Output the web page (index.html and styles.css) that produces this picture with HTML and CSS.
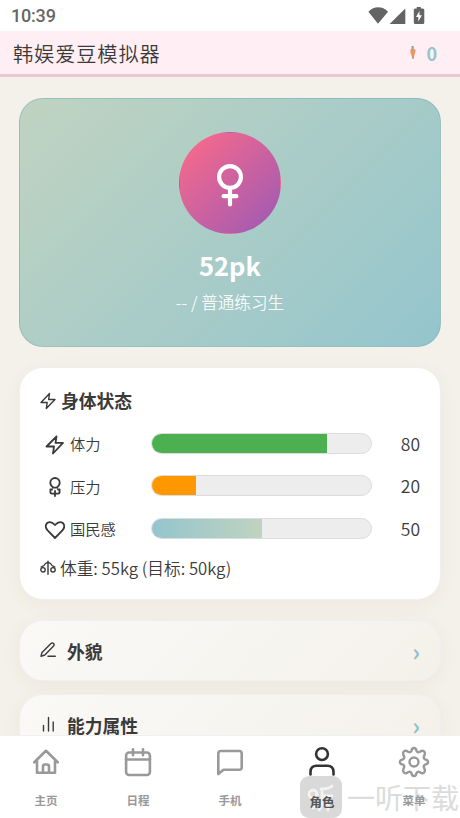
FILE: index.html
```html
<!DOCTYPE html>
<html lang="zh-CN">
<head>
<meta charset="utf-8">
<meta name="viewport" content="width=device-width, initial-scale=1">
<title>韩娱爱豆模拟器</title>
<link rel="stylesheet" href="styles.css">
</head>
<body>
<div class="status-bar">
  <span class="clock">10:39</span>
  <svg class="signals" width="60" height="20" viewBox="0 0 60 20" fill="#646464">
    <path d="M.4 5.700C6-.1 14.400-.1 20 5.700L10 17.800z"/>
    <path d="M37.300 2.500V18H21.600z"/>
    <path fill-rule="evenodd" d="M48.800 1h4v1.500h2q1.500 0 1.500 1.500v12.500q0 1.500-1.500 1.500h-7.500q-1.500 0-1.500-1.500V4q0-1.500 1.500-1.500h1.500zM51.500 5l-3.500 6h2.300v4.500l3.600-6.200h-2.400z"/>
  </svg>
</div>
<header class="app-header">
  <h1>韩娱爱豆模拟器</h1>
  <div class="currency">
    <svg width="6" height="14" viewBox="0 0 6 14"><path d="M1.400 0h2.400v4H1.400z" fill="#86b894"/><path d="M.3 3.500q2.700-1 5.200 0 .2 3-1 5L3.600 13H2.300L1.400 9Q.2 7 .3 3.500z" fill="#ea9464"/></svg>
    <span>0</span>
  </div>
</header>
<main class="content">
  <section class="profile">
    <div class="avatar">
      <svg width="30" height="48" viewBox="0 0 30 48" fill="none" stroke="#fff" stroke-width="4.200" stroke-linecap="round"><circle cx="15" cy="16" r="10.900"/><path d="M15 27v16.400M8.600 35.200h12.800"/></svg>
    </div>
    <div class="name">52pk</div>
    <div class="role">-- / 普通练习生</div>
  </section>
  <section class="card">
    <h2><svg width="16" height="18" viewBox="0 0 16 18" class="line"><path d="M9.500 1.500 1 10.500h6.200L6.300 16.500 15 7.500H8.700z"/></svg>身体状态</h2>
    <div class="stat">
      <span class="icon"><svg width="20" height="20" viewBox="0 0 20 20" class="line bold"><path d="M11.500 1.500 1.500 11.500H9L8 18.500l10-10.600h-7.500z"/></svg></span>
      <span class="label">体力</span>
      <div class="track"><div class="fill energy" style="width:80%"></div></div>
      <span class="value">80</span>
    </div>
    <div class="stat">
      <span class="icon"><svg width="20" height="20" viewBox="0 0 20 20" class="line bold"><path d="M8.300 10.500C6 9 5.300 7.500 5.300 5.700a4.700 4.700 0 0 1 9.400 0c0 1.800-.7 3.300-3 4.800M7.800 10.700h4.400M5.400 12.500v2.500q0 1.600 1.600 1.600h6q1.600 0 1.600-1.600v-2.500h-1.600M5.400 12.500H7M10 14v5"/></svg></span>
      <span class="label">压力</span>
      <div class="track"><div class="fill stress" style="width:20%"></div></div>
      <span class="value">20</span>
    </div>
    <div class="stat">
      <span class="icon"><svg width="20" height="20" viewBox="0 0 20 20" class="line bold"><path d="M10 18 2.400 10.200C-.8 6.500 1.200 2.100 4.800 2.100 7.300 2.100 8.500 3.300 10 5c1.500-1.700 2.700-2.900 5.200-2.900 3.600 0 5.600 4.400 2.400 8.100z"/></svg></span>
      <span class="label">国民感</span>
      <div class="track"><div class="fill public" style="width:50%"></div></div>
      <span class="value">50</span>
    </div>
    <div class="weight"><svg width="16" height="16" viewBox="0 0 16 16" class="line"><path d="M8 1.200v13M1.300 7Q4.300 6 5.500 3.500L8 2.200l2.500 1.300Q11.700 6 14.700 7"/><circle cx="3" cy="9.800" r="2.200"/><circle cx="13" cy="9.800" r="2.200"/></svg>体重: 55kg (目标: 50kg)</div>
  </section>
  <section class="fold">
    <svg width="16" height="16" viewBox="0 0 16 16" class="line"><path d="M1 14.300 2 10.500 11 1.500q1.300-1 2.500.1t.1 2.500L4.800 13zM8 14.300h7.300"/></svg>
    <h3>外貌</h3><span class="chevron">›</span>
  </section>
  <section class="fold">
    <svg width="16" height="16" viewBox="0 0 16 16" class="line"><path d="M3.500 9.500V15M8.500 1.500V15M13.200 6v9"/></svg>
    <h3>能力属性</h3><span class="chevron">›</span>
  </section>
</main>
<nav class="tabs">
  <a class="tab"><svg width="32" height="32" viewBox="0 0 32 32"><path d="M4.300 16.300 16 4.800l11.700 11.500M7 14.500v12.300h18V14.500M13 26.500v-6q0-2 2-2h2q2 0 2 2v6"/></svg><span>主页</span></a>
  <a class="tab"><svg width="32" height="32" viewBox="0 0 32 32"><rect x="4.100" y="6.500" width="23.800" height="22.500" rx="3"/><path d="M4 13.500h24M11 3.300v6M21 3.300v6"/></svg><span>日程</span></a>
  <a class="tab"><svg width="32" height="32" viewBox="0 0 32 32"><path d="M4.300 28V7.500q0-2.500 2.500-2.500h18.400q2.500 0 2.500 2.500v13.800q0 2.500-2.500 2.500H9.500z"/></svg><span>手机</span></a>
  <a class="tab active"><svg width="32" height="32" viewBox="0 0 32 32"><circle cx="16" cy="8.100" r="5.900"/><path d="M4.500 28.500V26q0-6.200 6.200-6.200h10.600q6.200 0 6.200 6.200v2.500"/></svg><span>角色</span></a>
  <a class="tab"><svg class="gear" width="32" height="32" viewBox="0 0 32 32"><path d="M13.400 5C14.100.900 17.900.900 18.600 5Q19.500 7 21.900 5.700C25.300 3.300 28 6 26.300 9.700Q25 12 27 13.400C31.100 14.100 31.100 17.900 27 18.600Q25 19.600 26.300 22.300C28 26 25.300 28.700 21.900 26.300Q19.500 25 18.600 27C17.900 31.100 14.100 31.100 13.400 27Q12.400 25 10.100 26.300C6.700 28.700 4 26 5.700 22.300Q7 19.600 5 18.600C.900 17.900.900 14.100 5 13.400Q7 12 5.700 9.700C4 6 6.700 3.300 10.100 5.700Q12.400 7 13.400 5z"/><circle cx="16" cy="16" r="4.500"/></svg><span>菜单</span></a>
  <div class="watermark">
    <div class="mark"><svg width="42" height="42" viewBox="0 0 42 42" fill="none" stroke="#f3f3f3" stroke-width="2.800" stroke-linecap="round"><circle cx="13" cy="18" r="4"/><path d="M17 18v8q0 4-4 6M21 13q8 0 11-3M22 13v12q0 6-3 9M22 20h10M28 20v14"/></svg></div>
    <span>一听下载</span>
  </div>
</nav>
</body>
</html>
```

FILE: styles.css
```css
* { box-sizing: border-box; }
body {
  margin: 0;
  height: 818px;
  overflow: hidden;
  display: flex;
  flex-direction: column;
  background: #f4f1ea;
  color: #3a3a3a;
  font-family: "Noto Sans CJK SC", sans-serif;
  font-weight: 350;
}
h1, h2, h3 { margin: 0; }
svg { flex: none; display: block; }
.line { fill: none; stroke: #3a3a3a; stroke-width: 1.4; stroke-linecap: round; stroke-linejoin: round; }
.line.bold { stroke-width: 1.8; }

.status-bar {
  flex: none;
  height: 31px;
  padding: 0 32px 0 11px;
  display: flex;
  align-items: center;
  justify-content: space-between;
  background: #fff;
}
.clock { font: 500 18px/31px Roboto, sans-serif; color: #666; letter-spacing: -0.2px; }
.signals { margin-top: 0; }

.app-header {
  flex: none;
  height: 46px;
  padding: 0 23px 0 13px;
  display: flex;
  align-items: center;
  justify-content: space-between;
  background: #ffeff4;
  border-bottom: 3px solid #e6cad1;
}
.app-header h1 { font-size: 20.200px; font-weight: 350; letter-spacing: 0.9px; line-height: 43px; padding-top: 2px; }
.currency { display: flex; align-items: center; gap: 10px; color: #94c5cd; font-weight: 700; font-size: 18px; line-height: 43px; }
.currency span { padding-top: 1px; }

.content { flex: 1; min-height: 0; overflow: hidden; padding: 21px 19px 0; }
.profile {
  height: 249px;
  border: 1px solid rgba(120, 180, 185, 0.5);
  border-radius: 24px;
  background: linear-gradient(135deg, #c0d3c1, #94c5cd);
  display: flex;
  flex-direction: column;
  align-items: center;
  padding-top: 33px;
  color: #fff;
}
.avatar {
  width: 102px;
  height: 102px;
  flex: none;
  border: 1px solid transparent;
  border-radius: 50%;
  background: linear-gradient(135deg, #ff6b88, #9b59b6);
  display: flex;
  align-items: center;
  justify-content: center;
}
.avatar svg { margin-top: 3px; }
.name { font-size: 25.500px; font-weight: 700; line-height: 38px; margin-top: 12px; }
.role { font-size: 16.600px; line-height: 24px; margin-top: 6px; opacity: 0.9; }

.card {
  height: 233px;
  margin: 20px 0 20px;
  padding: 19px 20px 0;
  border: 1px solid #f0efef;
  border-radius: 24px;
  background: #fff;
  box-shadow: 0 4px 18px rgba(100, 80, 40, 0.05);
}
.card h2 { display: flex; align-items: center; gap: 5px; height: 27px; font-size: 17.800px; font-weight: 700; line-height: 27px; }
.stat { display: flex; align-items: center; height: 42.500px; }
.card h2 + .stat { margin-top: 8px; }
.icon { width: 30px; display: flex; justify-content: center; padding-top: 3px; }
.label { width: 81px; font-size: 15.300px; line-height: 24px; }
.track { width: 221px; height: 21px; overflow: hidden; border: 1px solid #dcdcdc; border-radius: 11px; background: #ededed; }
.fill { height: 100%; }
.energy { background: #4caf50; }
.stress { background: #ff9800; }
.public { background: linear-gradient(90deg, #94c5cd, #c0d3c1); }
.value { margin-left: auto; font-size: 17.500px; line-height: 24px; padding-top: 1px; }
.weight { display: flex; align-items: center; gap: 4px; font-size: 16.700px; line-height: 24px; margin-top: 6px; }

.fold {
  height: 61px;
  margin-bottom: 13px;
  padding: 0 20px;
  border: 1px solid #efeff0;
  border-radius: 24px;
  background: linear-gradient(135deg, #faf9f7, #f4f1ea);
  box-shadow: 0 4px 18px rgba(100, 80, 40, 0.06);
  display: flex;
  align-items: center;
}
.fold svg { margin: 0 11px 1px 0; }
.fold h3 { font-size: 17.800px; font-weight: 700; line-height: 27px; padding-top: 1px; }
.chevron { margin-left: auto; color: #8fc2cb; font-size: 24px; font-weight: 700; line-height: 30px; }

.tabs {
  flex: none;
  height: 83px;
  position: relative;
  display: grid;
  grid-template-columns: repeat(5, 1fr);
  background: #fff;
  border-top: 1px solid #f0f0f0;
}
.tab { display: flex; flex-direction: column; align-items: center; padding-top: 10px; color: #999; font-size: 11.500px; font-weight: 700; }
.tab svg { fill: none; stroke: currentColor; stroke-width: 2.600; stroke-linecap: round; stroke-linejoin: round; }
.tab .gear { stroke-width: 2.400; }
.tab span { position: relative; z-index: 1; line-height: 18px; margin-top: 13px; }
.tab.active { color: #333; }
.tab.active span { color: #555; font-size: 12.500px; margin-top: 15px; }
.watermark { position: absolute; left: 300px; top: 40px; display: flex; align-items: center; gap: 5px; white-space: nowrap; color: #dcdcdc; font-size: 28px; font-weight: 400; line-height: 42px; }
.mark { width: 42px; height: 42px; border-radius: 9px; background: #d9d9d9; }
```
